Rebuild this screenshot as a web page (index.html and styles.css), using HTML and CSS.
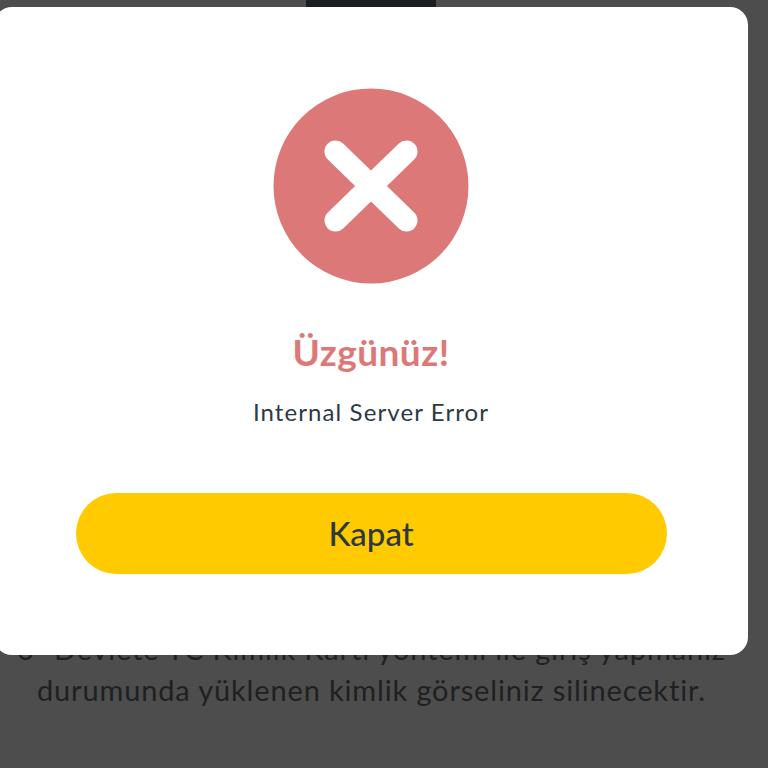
FILE: index.html
```html
<!DOCTYPE html>
<html lang="tr">
<head>
<meta charset="utf-8">
<title>Üzgünüz!</title>
<link rel="stylesheet" href="styles.css">
</head>
<body>
<main class="page">
  <div class="handle"></div>
  <ol class="notes">
    <li class="note"><span class="num">6</span><span class="line">Devlete TC Kimlik Kartı yöntemi ile giriş yapmanız</span></li>
    <li class="note cont"><span class="line">durumunda yüklenen kimlik görseliniz silinecektir.</span></li>
  </ol>
</main>
<div class="dialog" role="alertdialog">
  <svg class="icon" viewBox="0 0 196 196" width="196" height="196" aria-hidden="true">
    <circle cx="98" cy="98" r="97.5" fill="#dd7878"/>
    <path d="M62.5 63.5 L133.5 132.5 M133.5 63.5 L62.5 132.5" stroke="#fff" stroke-width="22" stroke-linecap="round" fill="none"/>
  </svg>
  <h1 class="title">Üzgünüz!</h1>
  <p class="message">Internal Server Error</p>
  <button class="close" type="button">Kapat</button>
</div>
</body>
</html>
```
FILE: styles.css
```css
* { box-sizing: border-box; }
html, body { margin: 0; height: 100%; overflow: hidden; }
body { background: #4d4d4d; font-family: "Lato", "Noto Sans", sans-serif; }
.page { height: 768px; display: flex; flex-direction: column; }
.handle { width: 130px; height: 8px; margin-left: 306px; background: #1c1f22; }
.notes { list-style: none; margin: 620px 0 0; padding: 0 0 0 17px; color: #1f2022; font-size: 29px; line-height: 41px; letter-spacing: 0.85px; }
.note { display: flex; white-space: nowrap; }
.num { width: 37px; }
.cont { padding-left: 20px; }
.dialog { position: fixed; left: -6px; top: 7px; width: 754px; height: 648px; background: #fff; border-radius: 18px; display: flex; flex-direction: column; align-items: center; padding-top: 81px; }
.icon { display: block; }
.title { margin: 45px 0 0; font-size: 37px; line-height: 46px; font-weight: 700; color: #dd7878; letter-spacing: 0.45px; }
.message { margin: 22px 0 0; font-size: 24px; line-height: 30px; color: #2c3a47; letter-spacing: 1.1px; }
.close { margin-top: 66px; width: 591px; height: 81px; border: 0; border-radius: 41px; background: #ffcb00; color: #2c3a3f; font: 500 33px/1 "Lato", "Noto Sans", sans-serif; }
```
